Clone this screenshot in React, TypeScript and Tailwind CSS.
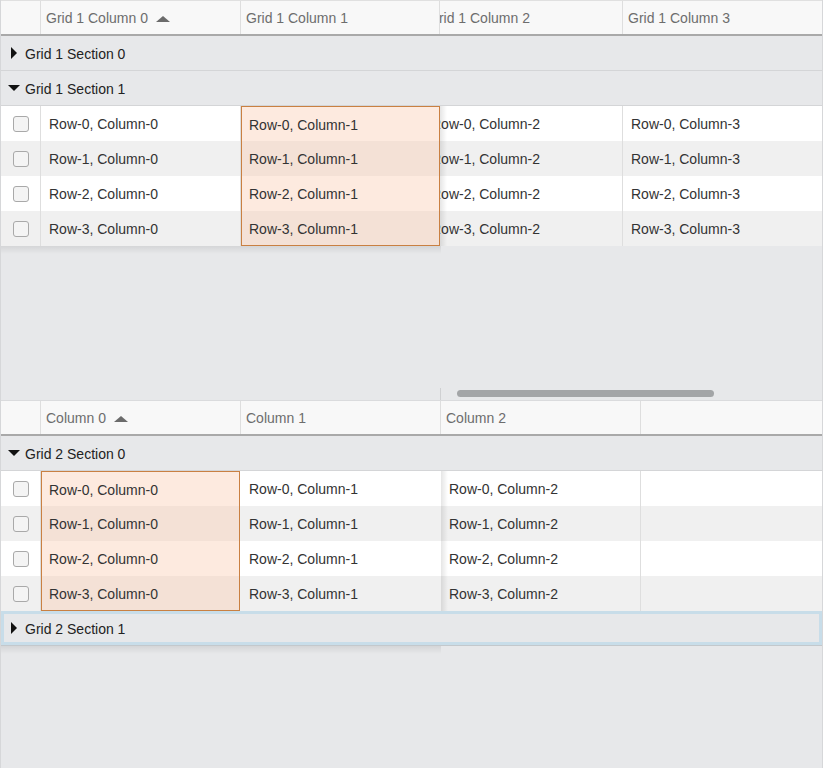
import React from "react";

type Row = string[];

const rows: Row[] = [0, 1, 2, 3].map((r) => [0, 1, 2, 3].map((c) => `Row-${r}, Column-${c}`));

const rowBg = ["bg-white", "bg-[#f0f0f0]", "bg-white", "bg-[#f0f0f0]"];
const hotBg = ["bg-[#fdeadf]", "bg-[#f4e1d6]", "bg-[#fdeadf]", "bg-[#f4e1d6]"];

function SortArrow() {
  return (
    <span className="ml-2 inline-block h-0 w-0 border-x-[7px] border-b-[6px] border-x-transparent border-b-[#6b6b6b]" />
  );
}

function HeaderCell({ label, sorted, w, last }: { label?: string; sorted?: boolean; w: string; last?: boolean }) {
  return (
    <div className={`${w} flex h-full shrink-0 items-center overflow-hidden whitespace-nowrap pl-[5px] pt-[2px] ${last ? "" : "border-r border-[#dedede]"}`}>
      {label}
      {sorted && <SortArrow />}
    </div>
  );
}

function SectionRow({ label, open, focused }: { label: string; open?: boolean; focused?: boolean }) {
  const content = (
    <>
      <span className="flex w-[12px] justify-center">
        {open ? (
          <span className="h-0 w-0 border-x-[6px] border-t-[6px] border-x-transparent border-t-[#111]" />
        ) : (
          <span className="h-0 w-0 border-y-[6px] border-l-[6px] border-y-transparent border-l-[#111]" />
        )}
      </span>
      <span className="ml-[5px] pt-[2px]">{label}</span>
    </>
  );
  if (focused) {
    return (
      <div className="h-[35px] shrink-0 border-b border-[#c3c8cc]">
        <div className="flex h-[34px] items-center border-[3px] border-[#c8dde9] pl-[4px] text-[#222]">{content}</div>
      </div>
    );
  }
  return (
    <div className="flex h-[35px] shrink-0 items-center border-b border-[#d4d5d7] pl-[7px] text-[#222]">{content}</div>
  );
}

function CheckColumn() {
  return (
    <div className="w-[40px] shrink-0 border-r border-[#dedede]">
      {rows.map((_, i) => (
        <div key={i} className={`flex h-[35px] items-center justify-center ${rowBg[i]}`}>
          <span className="h-4 w-4 rounded-[3px] border border-[#a9a9a9] bg-[#f4f4f4]" />
        </div>
      ))}
    </div>
  );
}

function DataColumn({
  col,
  hot,
  border = true,
  w = "w-[200px]",
  pad = "px-2",
}: {
  col: number;
  hot?: boolean;
  border?: boolean;
  w?: string;
  pad?: string;
}) {
  return (
    <div className={`${w} shrink-0 ${!hot && border ? "border-r border-[#dedede]" : ""}`}>
      {rows.map((r, i) => (
        <div
          key={i}
          className={`flex h-[35px] items-center whitespace-nowrap pt-[2px] text-[#333] ${
            hot
              ? `${hotBg[i]} border-x border-[#c98042] ${i === 0 ? "border-t" : ""} ${i === 3 ? "border-b" : ""} pl-[7px] pr-2`
              : `${rowBg[i]} ${pad}`
          }`}
        >
          {col >= 0 ? r[col] : ""}
        </div>
      ))}
    </div>
  );
}

function EdgeShadow() {
  return <div className="pointer-events-none absolute inset-y-0 left-0 w-[7px] bg-linear-to-r from-black/10 to-transparent" />;
}

function BottomShadow() {
  return <div className="h-2 w-[440px] shrink-0 bg-linear-to-b from-black/[0.08] to-transparent" />;
}

function GridOne() {
  return (
    <div className="flex h-[400px] flex-col">
      <div className="flex h-[36px] shrink-0 border-t border-b-2 border-t-[#e0e0e0] border-b-[#a9a9a9] bg-[#f8f8f8] text-[#6d6d6d]">
        <HeaderCell w="w-[40px]" />
        <HeaderCell w="w-[200px]" label="Grid 1 Column 0" sorted />
        <HeaderCell w="w-[199px]" label="Grid 1 Column 1" />
        <div className="flex flex-1 overflow-hidden">
          <div className="-ml-[17px] flex">
            <HeaderCell w="w-[200px]" label="Grid 1 Column 2" />
            <HeaderCell w="w-[200px]" label="Grid 1 Column 3" last />
          </div>
        </div>
      </div>
      <SectionRow label="Grid 1 Section 0" />
      <SectionRow label="Grid 1 Section 1" open />
      <div className="flex shrink-0">
        <div className="flex w-[439px] shrink-0">
          <CheckColumn />
          <DataColumn col={0} />
          <DataColumn col={1} hot w="w-[199px]" />
        </div>
        <div className="relative flex-1 overflow-hidden">
          <div className="-ml-[17px] flex">
            <DataColumn col={2} />
            <DataColumn col={3} border={false} />
          </div>
          <EdgeShadow />
        </div>
      </div>
      <BottomShadow />
      <div className="flex-1" />
      <div className="flex h-[14px] shrink-0">
        <div className="mt-[2px] w-[440px] shrink-0 border-r border-[#cfd0d2]" />
        <div className="ml-[16px] mt-[4px] h-[7px] w-[257px] rounded-full bg-[#a3a5a7]" />
      </div>
    </div>
  );
}

function GridTwo() {
  return (
    <div className="flex flex-1 flex-col border-t border-[#dadbdd]">
      <div className="flex h-[35px] shrink-0 border-b-2 border-[#a9a9a9] bg-[#f8f8f8] text-[#6d6d6d]">
        <HeaderCell w="w-[40px]" />
        <HeaderCell w="w-[200px]" label="Column 0" sorted />
        <HeaderCell w="w-[200px]" label="Column 1" />
        <HeaderCell w="w-[200px]" label="Column 2" />
        <div className="flex-1" />
      </div>
      <SectionRow label="Grid 2 Section 0" open />
      <div className="flex shrink-0">
        <div className="flex w-[440px] shrink-0">
          <CheckColumn />
          <DataColumn col={0} hot w="w-[199px]" />
          <DataColumn col={1} border={false} w="w-[201px]" pad="pl-[9px] pr-2" />
        </div>
        <div className="relative flex flex-1 overflow-hidden">
          <DataColumn col={2} />
          <DataColumn col={-1} border={false} w="flex-1" />
          <EdgeShadow />
        </div>
      </div>
      <SectionRow label="Grid 2 Section 1" focused />
      <BottomShadow />
    </div>
  );
}

export default function App() {
  return (
    <div className="flex h-[768px] flex-col overflow-hidden border-x border-[#d6d7d9] bg-[#e7e8ea] font-['Liberation_Sans',Arial,sans-serif] text-[14px]">
      <GridOne />
      <GridTwo />
    </div>
  );
}
